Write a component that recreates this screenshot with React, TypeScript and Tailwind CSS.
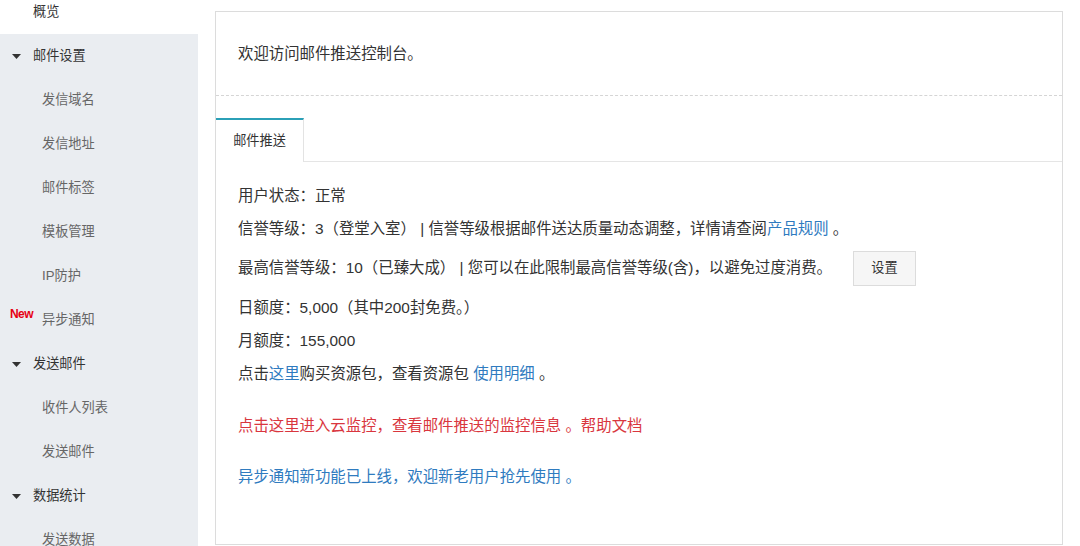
import React from "react"

const font = "font-['Liberation_Sans','Noto_Sans_CJK_SC',sans-serif]"

function Caret() {
	return (
		<svg width="9" height="5" viewBox="0 0 9 5" className="shrink-0">
			<path d="M0 0h9L4.5 5z" fill="#333" />
		</svg>
	)
}

function Section({ title, items }: { title: string; items: string[] }) {
	return (
		<div>
			<div className="flex h-[44px] items-center gap-[12px] pl-[12px] text-[13.2px] text-[#333]">
				<Caret />
				<span>{title}</span>
			</div>
			{items.map((item) => (
				<div
					key={item}
					className="relative flex h-[44px] items-center pl-[42px] text-[13.2px] text-[#666]"
				>
					{item === "异步通知" && (
						<span className="absolute left-[10px] top-[7px] text-[12px] font-bold tracking-[-0.6px] text-[#e60012]">
							New
						</span>
					)}
					{item}
				</div>
			))}
		</div>
	)
}

function Sidebar() {
	return (
		<aside className="w-[198px] shrink-0 overflow-hidden bg-[#eaedf1]">
			<div className="-mt-[10px] flex h-[44px] items-center bg-white pl-[33px] text-[13.2px] text-[#333]">
				概览
			</div>
			<Section
				title="邮件设置"
				items={["发信域名", "发信地址", "邮件标签", "模板管理", "IP防护", "异步通知"]}
			/>
			<Section title="发送邮件" items={["收件人列表", "发送邮件"]} />
			<Section title="数据统计" items={["发送数据"]} />
		</aside>
	)
}

const link = "text-[#2f7bbf]"

export default function App() {
	return (
		<div className={`flex h-[546px] overflow-hidden bg-white ${font}`}>
			<Sidebar />
			<main className="flex-1 px-[17px] pt-[11px]">
				<div className="h-[534px] border border-[#dcdcdc] bg-white">
					<div className="flex h-[84px] items-center border-b border-dashed border-[#d5d5d5] pl-[22px] text-[15.4px] text-[#333]">
						欢迎访问邮件推送控制台。
					</div>
					<div className="mt-[22px] flex border-b border-[#e5e5e5]">
						<div className="-mb-px flex h-[44px] w-[88px] items-center justify-center border-t-2 border-r border-t-[#2ba0b7] border-r-[#e3e3e3] bg-white text-[13.2px] text-[#333]">
							邮件推送
						</div>
					</div>
					<div className="pl-[22px] pt-[17px] text-[15.4px] text-[#333]">
						<div className="flex h-[33px] items-center">用户状态：正常</div>
						<div className="flex h-[33px] items-center whitespace-pre">
							信誉等级：3（登堂入室） | 信誉等级根据邮件送达质量动态调整，详情请查阅
							<span className={link}>产品规则</span> 。
						</div>
						<div className="flex h-[46px] items-center whitespace-pre">
							最高信誉等级：10（已臻大成） | 您可以在此限制最高信誉等级(含)，以避免过度消费。
							<button className="ml-[21px] h-[35px] w-[63px] border border-[#dcdcdc] bg-[#f6f6f6] text-[13.2px] text-[#333]">
								设置
							</button>
						</div>
						<div className="flex h-[33px] items-center">日额度：5,000（其中200封免费。）</div>
						<div className="flex h-[33px] items-center">月额度：155,000</div>
						<div className="flex h-[33px] items-center whitespace-pre">
							点击<span className={link}>这里</span>购买资源包，查看资源包{" "}
							<span className={link}>使用明细</span> 。
						</div>
						<div className="mt-[19px] flex h-[33px] items-center text-[#d9363e]">
							点击这里进入云监控，查看邮件推送的监控信息 。帮助文档
						</div>
						<div className="mt-[18px] flex h-[33px] items-center text-[#2f7bbf]">
							异步通知新功能已上线，欢迎新老用户抢先使用 。
						</div>
					</div>
				</div>
			</main>
		</div>
	)
}
